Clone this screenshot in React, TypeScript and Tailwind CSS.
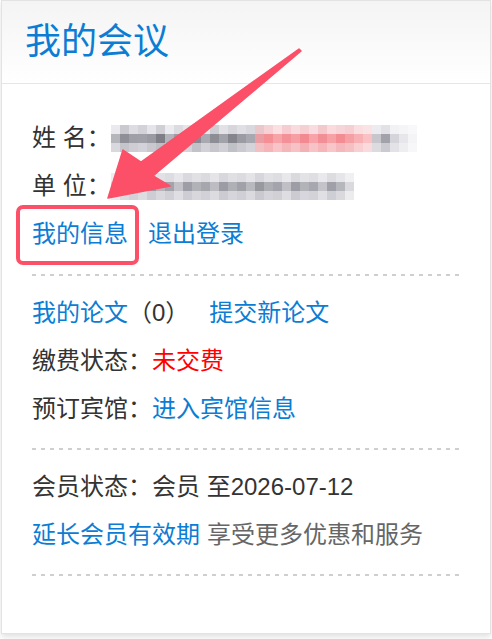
import type { ReactNode } from "react";

const FONT = { fontFamily: '"Liberation Sans", "Noto Sans CJK SC", sans-serif' };

// mosaic colours, one string per row of 9px cells
const nameRows = [
  ["#e9e9ee", "#c9c9cf", "#dcdce2", "#d2d2d8", "#e4e4ea", "#cfcfd5", "#ececf0", "#dcdce0", "#e6e6ea", "#d4d4da", "#e8e8ec", "#cdcdd3", "#e2e2e6", "#d6d6dc", "#e0e0e4", "#d8d8de", "#e9c7ca", "#f7d2d5", "#fbdfe1", "#f6ccd0", "#f9dadd", "#f6cfd2", "#f9dcdf", "#f4c9cc", "#fadadd", "#f7d4d7", "#f5cfd2", "#fadfe1", "#fbe3e5", "#ececf0", "#e2e2e6", "#f2f2f4", "#f5f5f7", "#f8f8fa"],
  ["#b5b5bc", "#8f8f98", "#9f9fa8", "#a0a0a8", "#999aa2", "#7e7e86", "#b3b3bb", "#9c9ca4", "#b0b0b8", "#8a8a92", "#a9a9b1", "#8d8d95", "#a2a2aa", "#85858d", "#9b9ba3", "#a8a8b0", "#e89ea3", "#f48f96", "#f7a4a9", "#f49198", "#f69ea4", "#f38a91", "#f7a3a8", "#f28e95", "#f6a1a6", "#f38d93", "#f5a0a5", "#f7b0b4", "#f9c1c4", "#c6c6cc", "#a2a2aa", "#d4d4da", "#e7e7eb", "#f4f4f6"],
  ["#d8d8de", "#c4c4cb", "#cdcdd3", "#d2d2d8", "#c8c8ce", "#bebec5", "#d6d6dc", "#cbcbd1", "#d4d4da", "#c2c2c9", "#d1d1d7", "#c6c6cc", "#cfcfd5", "#c0c0c7", "#cacad0", "#d3d3d9", "#f2c0c3", "#f6b3b8", "#f8c4c7", "#f5b6ba", "#f7c2c5", "#f4b1b5", "#f7c3c6", "#f5b5b9", "#f8c5c8", "#f5b7bb", "#f6c0c3", "#f9cfd1", "#fadadc", "#dcdce0", "#cacad0", "#e3e3e7", "#eeeef1", "#f7f7f9"],
];

const unitRows = [
  ["#eeeef1", "#e3e3e7", "#dfdfe4", "#e6e6ea", "#d8d8de", "#e2e2e6", "#dcdce1", "#e7e7eb", "#d9d9df", "#e1e1e5", "#dadadf", "#e5e5e9", "#d7d7dd", "#e0e0e4", "#dbdbe0", "#e4e4e8", "#d6d6dc", "#e2e2e6", "#dddde2", "#e8e8ec", "#d9d9de", "#e3e3e7", "#dedee3", "#e9e9ed", "#dcdce1", "#e6e6ea", "#f0f0f3"],
  ["#d7d7dc", "#b9b9c0", "#a9a9b1", "#bdbdc4", "#9a9aa3", "#b4b4bb", "#a3a3ab", "#c2c2c8", "#9e9ea6", "#b1b1b8", "#a6a6ae", "#bcbcc2", "#9c9ca5", "#afafb6", "#a1a1a9", "#b8b8bf", "#98989f", "#adadb4", "#a4a4ac", "#bfbfc5", "#9d9da5", "#b2b2b9", "#a7a7af", "#c3c3c9", "#a0a0a8", "#b6b6bd", "#d9d9de"],
  ["#e9e9ec", "#dadadf", "#d2d2d8", "#dcdce1", "#cdcdd3", "#d8d8dd", "#d0d0d6", "#dedee3", "#cecdd4", "#d7d7dc", "#d1d1d7", "#dbdbe0", "#cbcbd1", "#d5d5db", "#cfcfd5", "#dadadf", "#c9c9cf", "#d4d4da", "#d0d0d5", "#dddde2", "#cccbd2", "#d6d6dc", "#d2d2d7", "#e0e0e4", "#cecfd4", "#d9d9de", "#ececef"],
];

function Mosaic({ rows }: { rows: string[][] }) {
  return (
    <div className="flex flex-col">
      {rows.map((row, i) => (
        <div key={i} className="flex h-[9px]">
          {row.map((c, j) => (
            <div key={j} className="w-[9px] h-[9px]" style={{ background: c }} />
          ))}
        </div>
      ))}
    </div>
  );
}

function Row({ children }: { children: ReactNode }) {
  return <div className="h-[48px] flex items-center whitespace-nowrap">{children}</div>;
}

function Dashed() {
  return (
    <div className="h-[2px] bg-[linear-gradient(to_right,#cfcfcf_50%,transparent_50%)] bg-[length:9px_2px]" />
  );
}

export default function App() {
  return (
    <div className="relative w-[492px] h-[639px] bg-white overflow-hidden" style={FONT}>
      <div className="ml-px w-[490px] h-[634px] border border-[#e3e3e3] bg-white shadow-[0_3px_6px_rgba(0,0,0,0.12)]">
        <div className="h-[83px] border-b border-[#e6e6e6] bg-gradient-to-b from-[#f4f4f4] to-white flex items-center px-[23px]">
          <h1 className="text-[36px] leading-none text-[#0b7dd4]">我的会议</h1>
        </div>

        <div className="pt-[17px] px-[30px] text-[24px] text-[#333]">
          <div className="pt-[13px] pb-[16px]">
            <Row>
              <span>姓 名：</span>
              <Mosaic rows={nameRows} />
            </Row>
            <Row>
              <span>单 位：</span>
              <Mosaic rows={unitRows} />
            </Row>
            <Row>
              <a className="text-[#0b7dd4]">我的信息</a>
              <a className="ml-[20px] text-[#0b7dd4]">退出登录</a>
            </Row>
          </div>
          <Dashed />

          <div className="pt-[13px] pb-[15px]">
            <Row>
              <a className="text-[#0b7dd4]">我的论文</a>
              <span>（0）</span>
              <a className="ml-[20px] text-[#0b7dd4]">提交新论文</a>
            </Row>
            <Row>
              <span>缴费状态：</span>
              <span className="text-[#ff0000]">未交费</span>
            </Row>
            <Row>
              <span>预订宾馆：</span>
              <a className="text-[#0b7dd4]">进入宾馆信息</a>
            </Row>
          </div>
          <Dashed />

          <div className="pt-[13px] pb-[15px]">
            <Row>
              <span>会员状态：会员 至2026-07-12</span>
            </Row>
            <Row>
              <a className="text-[#0b7dd4]">延长会员有效期</a>
              <span className="ml-[7px] text-[#666]">享受更多优惠和服务</span>
            </Row>
          </div>
          <Dashed />
        </div>
      </div>

      {/* annotation overlay */}
      <div className="absolute left-[16px] top-[205px] w-[123px] h-[60px] border-[4px] border-[#fb5068] rounded-[7px]" />
      <svg className="absolute left-0 top-0 pointer-events-none" width="492" height="639" viewBox="0 0 492 639">
        <polygon
          points="108,198 123,150 141,162 299,49 301,51 153,176 170,186"
          fill="#fb5068"
          stroke="#fb5068"
          strokeWidth="1.5"
          strokeLinejoin="round"
        />
      </svg>
    </div>
  );
}
